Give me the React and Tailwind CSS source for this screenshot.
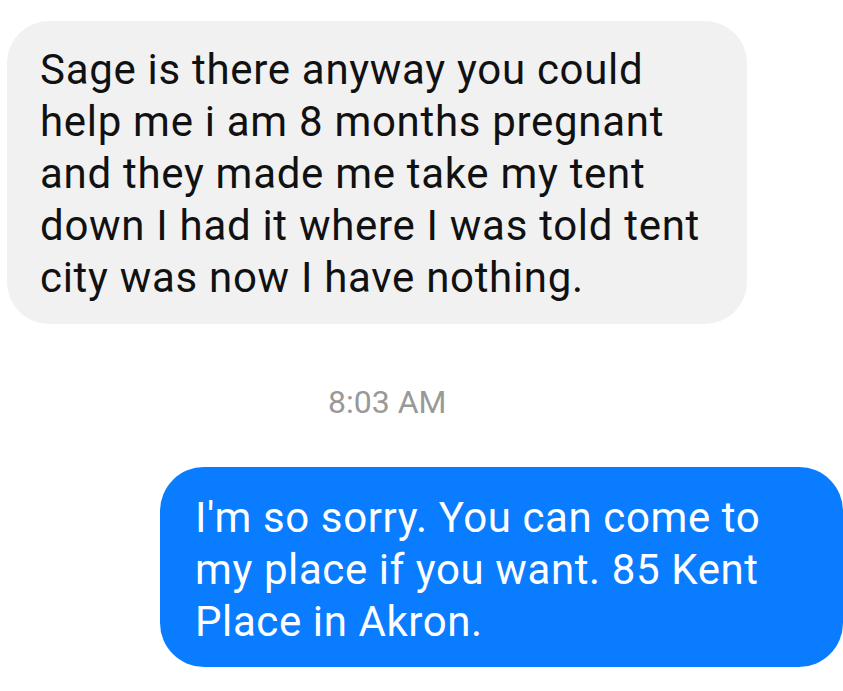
import React from 'react';

const incoming = [
    'Sage is there anyway you could',
    'help me i am 8 months pregnant',
    'and they made me take my tent',
    'down I had it where I was told tent',
    'city was now I have nothing.',
];

const outgoing = [
    "I'm so sorry. You can come to",
    'my place if you want. 85 Kent',
    'Place in Akron.',
];

function App() {
    return (
        <div className="w-[843px] h-[691px] bg-white overflow-hidden font-['Roboto',sans-serif]">
            <div className="pt-[21px]">
                {/* received message */}
                <div className="ml-[7px] w-[740px] h-[303px] rounded-[42px] bg-[#f1f1f1] pl-[33px] pt-[23px] text-[42px] leading-[52px] tracking-[0.7px] text-[#111]">
                    {incoming.map((line, i) => (
                        <div key={i} className="whitespace-nowrap">{line}</div>
                    ))}
                </div>

                <div className="mt-[59px] ml-[328px] text-[32px] leading-[38px] text-[#999]">8:03 AM</div>

                {/* sent message */}
                <div className="mt-[46px] ml-[160px] w-[683px] h-[200px] rounded-[44px] bg-[#0a7cff] pl-[35px] pt-[25px] text-[42px] leading-[52px] tracking-[0.6px] text-white">
                    {outgoing.map((line, i) => (
                        <div key={i} className="whitespace-nowrap">{line}</div>
                    ))}
                </div>
            </div>
        </div>
    );
}

export default App;
